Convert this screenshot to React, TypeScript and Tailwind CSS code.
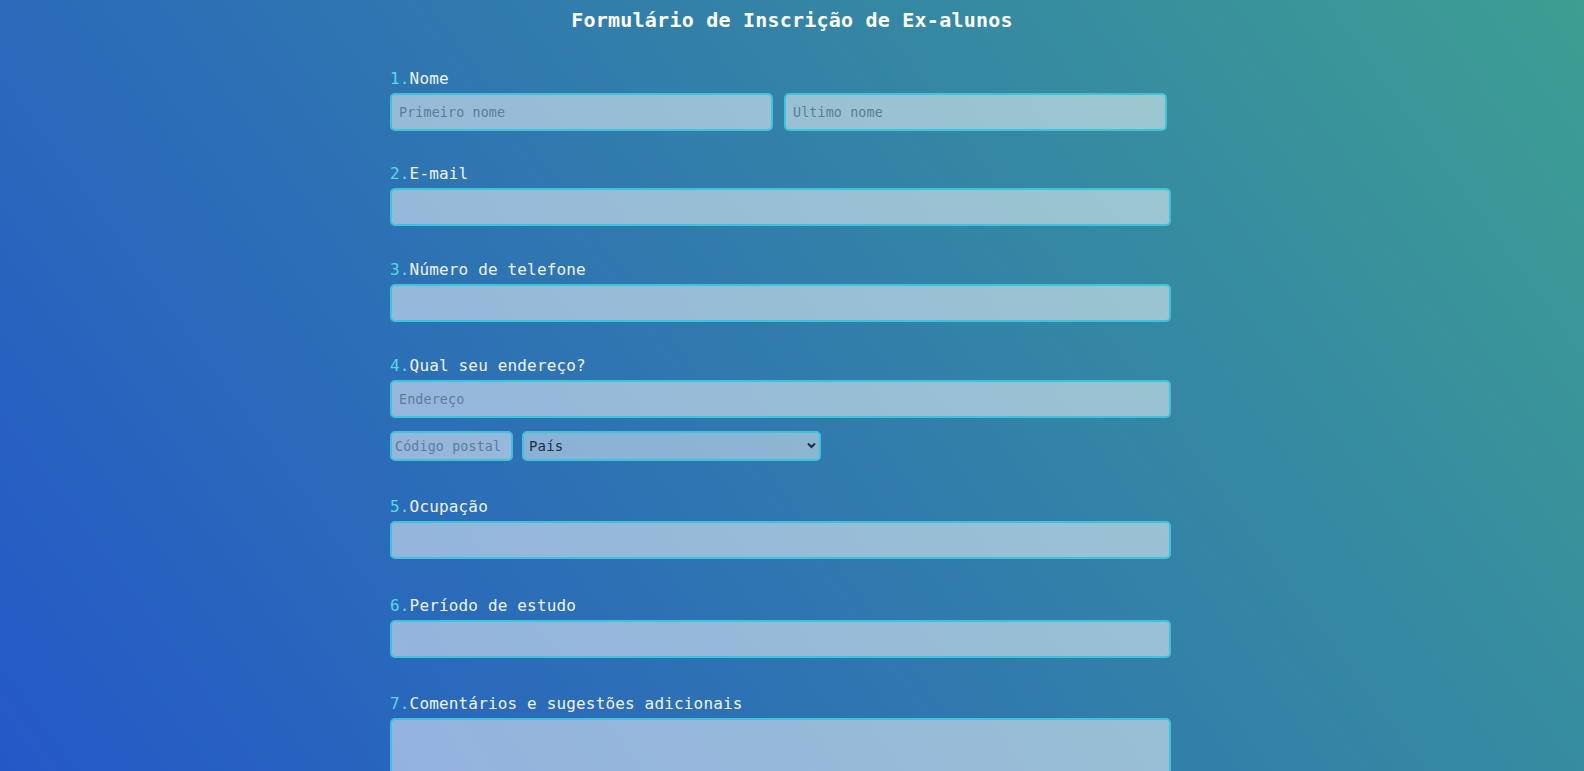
import React from "react";

const inputCls =
  "block w-full h-[38px] rounded-[5px] border-2 border-[#3ec4da] bg-white/50 px-[7px] text-[13.33px] leading-[22px] tracking-[0.14px] text-[#1d2f47] placeholder:text-[#5b7c99] outline-none";

function Label({ n, text }: { n: number; text: string }) {
  return (
    <label className="block pt-[1px] text-[16px] leading-[24px] tracking-[0.16px] text-[#eef4fa]">
      <span className="text-[#55dbe8]">{n}.</span>
      {text}
    </label>
  );
}

export default function App() {
  return (
    <div className="h-screen overflow-hidden bg-[linear-gradient(54deg,#2458c8,#3d9e92)] font-['DejaVu_Sans_Mono','Liberation_Mono',monospace]">
      <h1 className="pt-[6px] text-center text-[20px] leading-[28px] tracking-[0.22px] font-bold text-white">
        Formulário de Inscrição de Ex-alunos
      </h1>

      <form className="ml-[390px] mt-[32px] w-[781px]">
        {/* 1 */}
        <div className="mb-[30px]">
          <Label n={1} text="Nome" />
          <div className="mt-[2px] flex gap-[11px]">
            <input className={inputCls + " !w-[383px]"} placeholder="Primeiro nome" />
            <input className={inputCls + " !w-[383px]"} placeholder="Último nome" />
          </div>
        </div>

        {/* 2 */}
        <div className="mb-[31px]">
          <Label n={2} text="E-mail" />
          <input className={inputCls + " mt-[2px]"} type="email" />
        </div>

        {/* 3 */}
        <div className="mb-[31px]">
          <Label n={3} text="Número de telefone" />
          <input className={inputCls + " mt-[2px]"} type="tel" />
        </div>

        {/* 4 */}
        <div className="mb-[33px]">
          <Label n={4} text="Qual seu endereço?" />
          <input className={inputCls + " mt-[2px]"} placeholder="Endereço" />
          <div className="mt-[13px] flex gap-[9px]">
            <input
              className="block h-[30px] w-[123px] rounded-[5px] border-2 border-[#3ec4da] bg-white/50 px-[3px] text-[13.33px] leading-[20px] tracking-[0.14px] text-[#1d2f47] placeholder:text-[#5b7c99] outline-none"
              placeholder="Código postal"
            />
            <div className="relative w-[299px]">
              <select className="block h-[30px] w-full appearance-none rounded-[5px] border-2 border-[#3ec4da] bg-white/45 px-[5px] text-[14px] tracking-[0.14px] text-[#1a2c45] outline-none">
                <option>País</option>
              </select>
              <svg
                className="pointer-events-none absolute right-[5px] top-[11px]"
                width="9"
                height="7"
                viewBox="0 0 9 7"
              >
                <path d="M1 1.5 L4.5 5 L8 1.5" fill="none" stroke="#1a2c45" strokeWidth="2" />
              </svg>
            </div>
          </div>
        </div>

        {/* 5 */}
        <div className="mb-[34px]">
          <Label n={5} text="Ocupação" />
          <input className={inputCls + " mt-[2px]"} />
        </div>

        {/* 6 */}
        <div className="mb-[33px]">
          <Label n={6} text="Período de estudo" />
          <input className={inputCls + " mt-[2px]"} />
        </div>

        {/* 7 */}
        <div>
          <Label n={7} text="Comentários e sugestões adicionais" />
          <textarea className="mt-[2px] block h-[120px] w-full resize-none rounded-[5px] border-2 border-[#3ec4da] bg-white/50 px-[7px] text-[13.33px] outline-none" />
        </div>
      </form>
    </div>
  );
}
